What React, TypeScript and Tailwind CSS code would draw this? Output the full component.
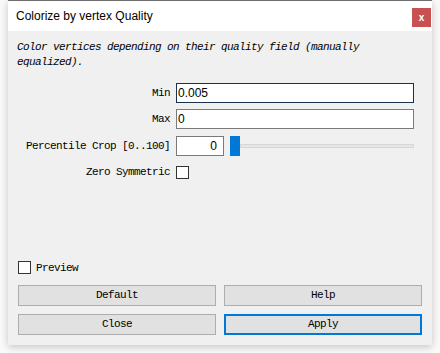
const mono = "font-['Liberation_Mono','DejaVu_Sans_Mono',monospace] text-[11px] tracking-[-0.6px]";

function Field({ label, children, className = "" }: { label: string; children: React.ReactNode; className?: string }) {
  return (
    <div className={`flex items-center ${className}`}>
      <span className={`${mono} w-[162px] text-right text-black`}>{label}</span>
      <div className="ml-[6px] flex items-center">{children}</div>
    </div>
  );
}

function Button({ label, primary = false }: { label: string; primary?: boolean }) {
  return (
    <div
      className={`flex h-[21px] w-[198px] items-center justify-center bg-[#e1e1e1] ${mono} text-black ${
        primary ? "border-2 border-[#0078d7]" : "border border-[#adadad]"
      }`}
    >
      {label}
    </div>
  );
}

export default function App() {
  return (
    <div className="h-[353px] w-[440px] overflow-hidden bg-[#fafafa]">
      <div className="ml-[8px] flex h-[345px] w-[424px] flex-col border-t border-[#6e6e6e] bg-[#f0f0f0] shadow-[0_2px_8px_rgba(0,0,0,0.22)]">
        {/* title bar */}
        <div className="flex h-[30px] justify-between bg-white">
          <span className="self-center pl-[8px] font-['Liberation_Sans',Arial,sans-serif] text-[12px] text-black">
            Colorize by vertex Quality
          </span>
          <div className="mr-[1px] mt-[7px] flex h-[19px] w-[19px] items-center justify-center bg-[#c75050] font-['Liberation_Sans',Arial,sans-serif] text-[10px] font-bold leading-none text-white">
            x
          </div>
        </div>

        {/* body */}
        <div className="flex flex-1 flex-col px-[10px] pb-[10px] pt-[9px]">
          <p className={`${mono} -ml-[1px] w-[404px] italic leading-[15px] text-black`}>
            Color vertices depending on their quality field (manually equalized).
          </p>

          <Field label="Min" className="mt-[13px] -ml-[10px]">
            <div className="flex h-[20px] w-[238px] items-center border border-[#17324d] bg-white pl-[1px] font-['Liberation_Sans',Arial,sans-serif] text-[12px] text-black">
              0.005
            </div>
          </Field>
          <Field label="Max" className="mt-[6px] -ml-[10px]">
            <div className="flex h-[20px] w-[238px] items-center border border-[#7a7a7a] bg-white pl-[1px] font-['Liberation_Sans',Arial,sans-serif] text-[12px] text-black">
              0
            </div>
          </Field>
          <Field label="Percentile Crop [0..100]" className="mt-[7px] -ml-[10px]">
            <div className="flex h-[20px] w-[48px] items-center justify-end border border-[#7a7a7a] bg-white pr-[6px] font-['Liberation_Sans',Arial,sans-serif] text-[12px] text-black">
              0
            </div>
            <div className="ml-[6px] flex items-center">
              <div className="h-[20px] w-[10px] bg-[#0078d7]" />
              <div className="h-[4px] w-[174px] border border-[#d6d6d6] bg-[#e7e7e7]" />
            </div>
          </Field>
          <Field label="Zero Symmetric" className="mt-[8px] -ml-[10px]">
            <div className="h-[13px] w-[13px] border border-[#333333] bg-white" />
          </Field>

          <div className="flex-1" />

          <div className="flex items-center">
            <div className="h-[13px] w-[13px] border border-[#333333] bg-white" />
            <span className={`${mono} ml-[5px] text-black`}>Preview</span>
          </div>

          <div className="mt-[9px] flex gap-[8px]">
            <Button label="Default" />
            <Button label="Help" />
          </div>
          <div className="mt-[8px] flex gap-[8px]">
            <Button label="Close" />
            <Button label="Apply" primary />
          </div>
        </div>
      </div>
    </div>
  );
}
